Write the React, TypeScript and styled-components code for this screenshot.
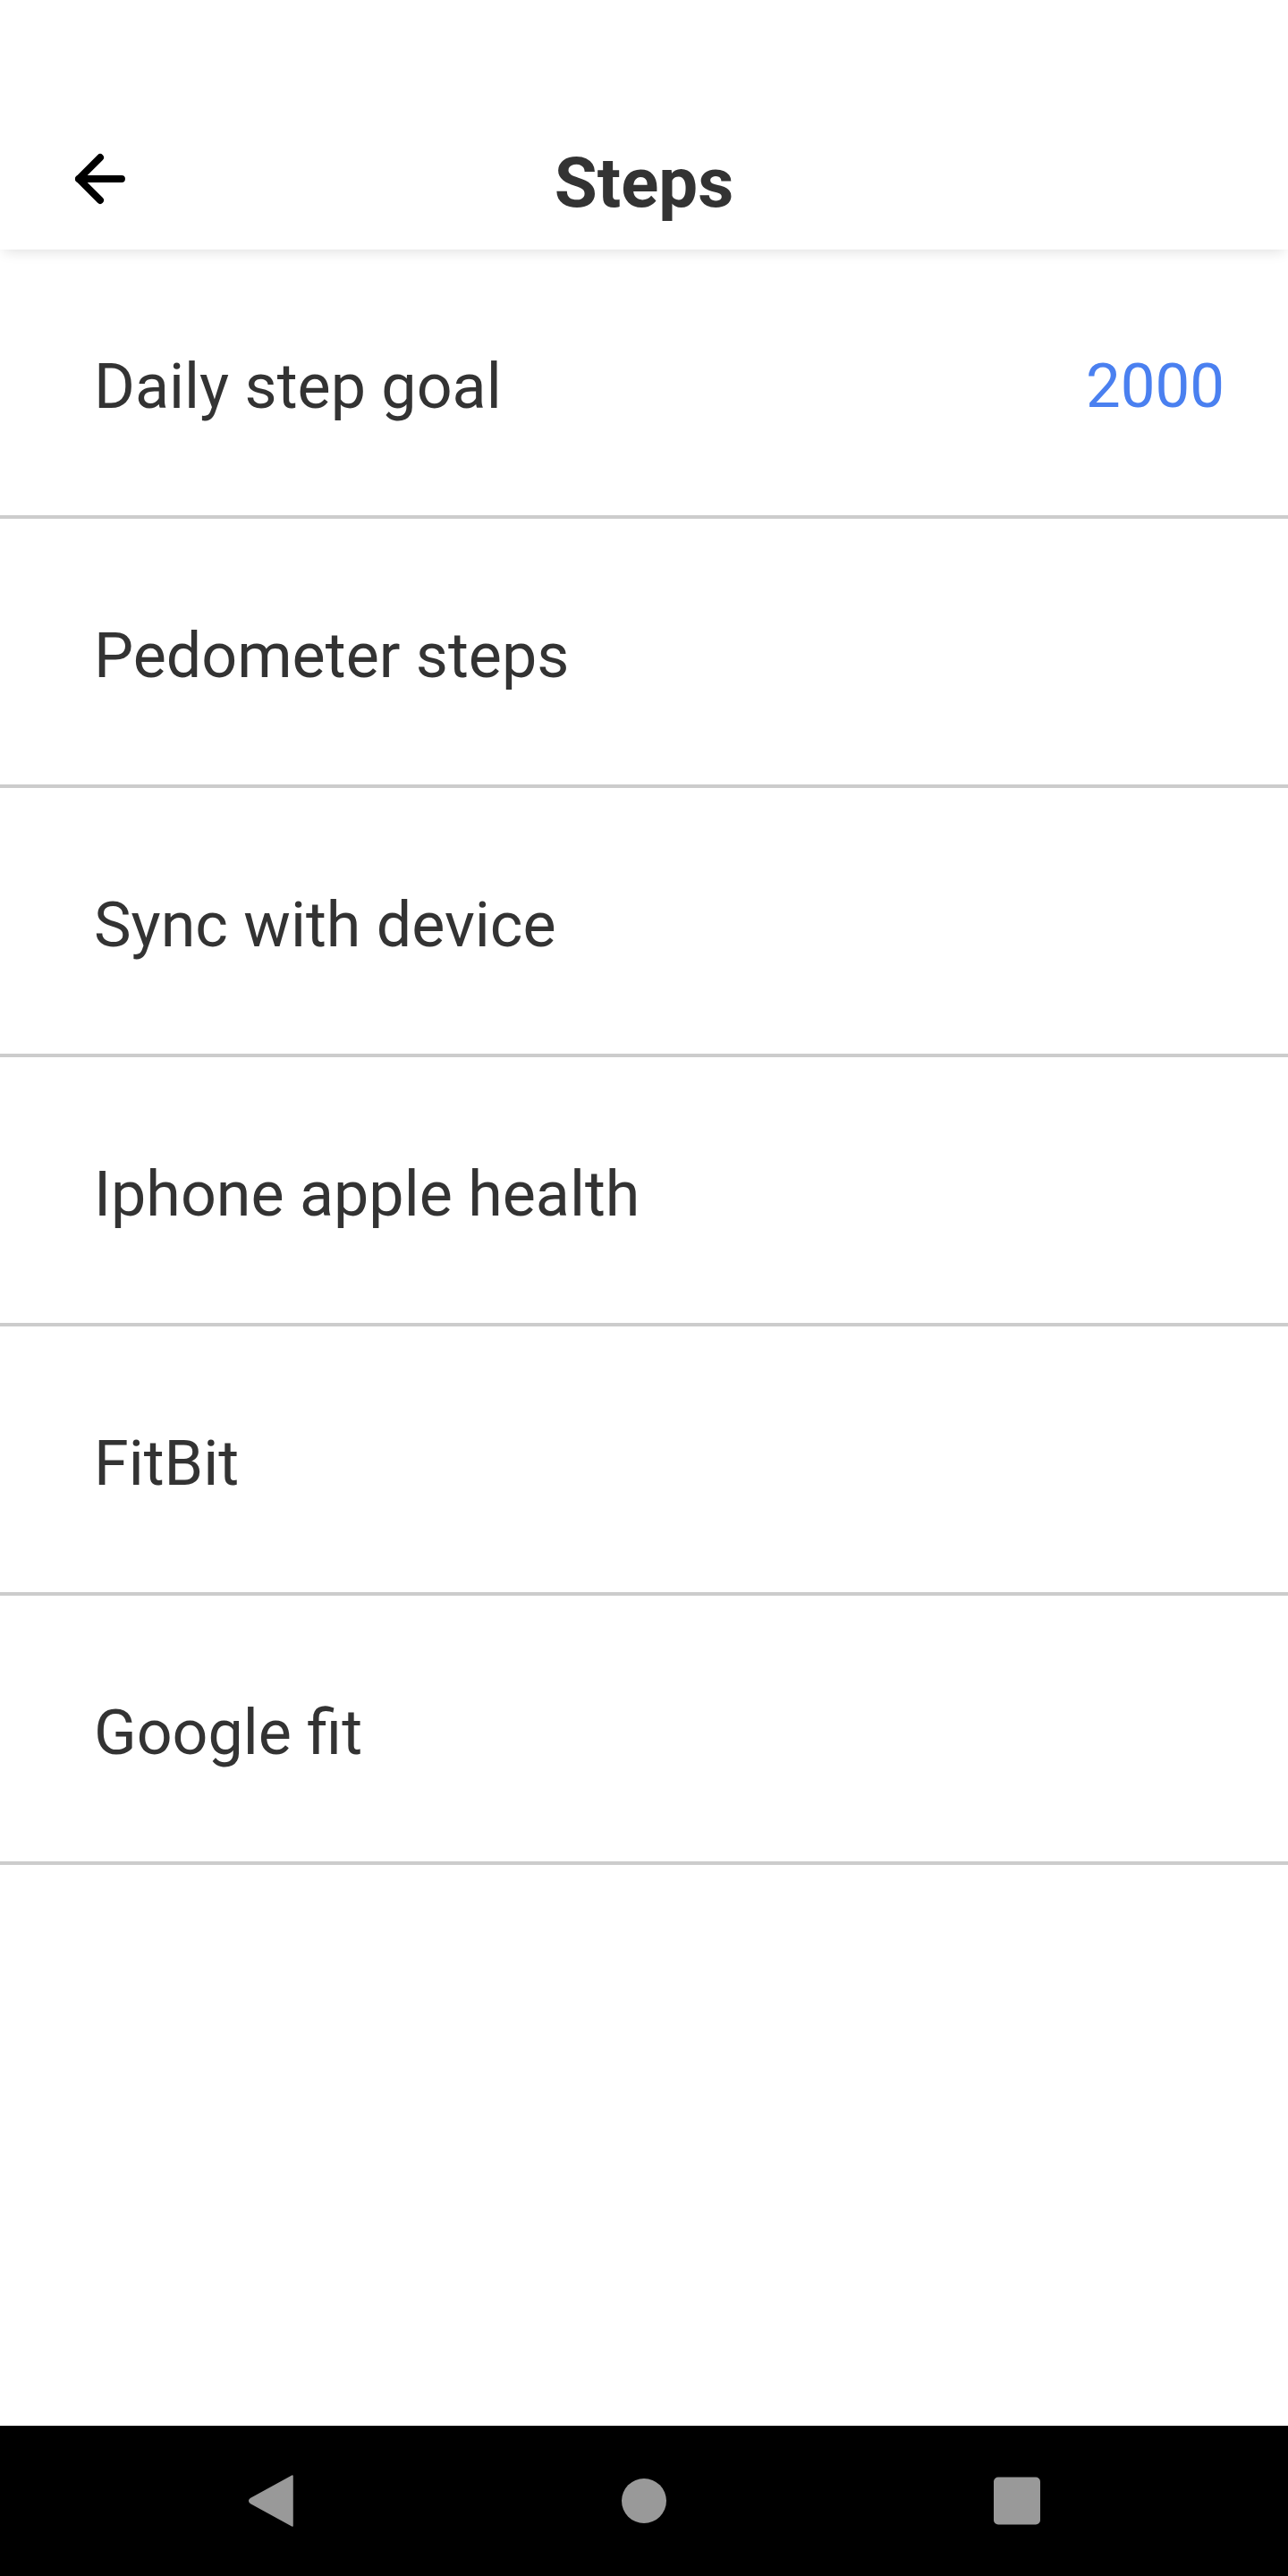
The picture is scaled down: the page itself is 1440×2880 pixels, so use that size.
import React from "react";
import styled, { createGlobalStyle } from "styled-components";
import { ArrowLeft } from "lucide-react";

const GlobalStyle = createGlobalStyle`
  html, body {
    margin: 0;
    padding: 0;
    background: #ffffff;
  }
  body {
    font-family: Roboto, "Noto Sans", "Liberation Sans", sans-serif;
    -webkit-font-smoothing: antialiased;
  }
  * { box-sizing: border-box; }
`;

const Screen = styled.div`
  width: 1440px;
  min-height: 2880px;
  display: flex;
  flex-direction: column;
  background: #ffffff;
`;

const Header = styled.header`
  position: relative;
  z-index: 1;
  display: flex;
  flex-direction: column;
  background: #ffffff;
  box-shadow: 0 6px 14px -4px rgba(0, 0, 0, 0.13);
`;

const StatusBar = styled.div`
  height: 120px;
`;

const Toolbar = styled.div`
  height: 159px;
  display: grid;
  grid-template-columns: 1fr auto 1fr;
  align-items: center;
`;

const BackButton = styled.button`
  justify-self: start;
  display: flex;
  align-items: center;
  justify-content: center;
  margin-left: 71px;
  padding: 0;
  border: none;
  background: transparent;
  color: #000000;
  cursor: pointer;
`;

const Title = styled.h1`
  margin: 0;
  padding-top: 10px;
  font-family: Roboto, "Noto Sans", sans-serif;
  font-size: 78px;
  line-height: 1;
  font-weight: 700;
  color: #333333;
`;

const List = styled.ul`
  margin: 0;
  padding: 0;
  list-style: none;
  display: flex;
  flex-direction: column;
`;

const Row = styled.li`
  height: 301px;
  display: flex;
  align-items: center;
  justify-content: space-between;
  padding: 8px 71px 0 105px;
  border-bottom: 4px solid #cccccc;
  background: #ffffff;
`;

const Label = styled.span`
  font-size: 70px;
  line-height: 1;
  font-weight: 400;
  color: #333333;
`;

const Value = styled.span`
  font-size: 69px;
  line-height: 1;
  font-weight: 400;
  color: #4a80f0;
`;

const Filler = styled.div`
  flex: 1;
`;

const NavBar = styled.nav`
  height: 168px;
  background: #000000;
  display: flex;
  align-items: center;
  justify-content: center;
  gap: 297px;
`;

const NavButton = styled.button`
  width: 120px;
  height: 120px;
  display: flex;
  align-items: center;
  justify-content: center;
  padding: 0;
  border: none;
  background: transparent;
  cursor: pointer;
`;

const items: { label: string; value?: string }[] = [
  { label: "Daily step goal", value: "2000" },
  { label: "Pedometer steps" },
  { label: "Sync with device" },
  { label: "Iphone apple health" },
  { label: "FitBit" },
  { label: "Google fit" },
];

export default function App() {
  return (
    <>
      <GlobalStyle />
      <Screen>
        <Header>
          <StatusBar />
          <Toolbar>
            <BackButton aria-label="Back">
              <ArrowLeft size={82} strokeWidth={2.35} />
            </BackButton>
            <Title>Steps</Title>
            <div />
          </Toolbar>
        </Header>
        <List>
          {items.map((it) => (
            <Row key={it.label}>
              <Label>{it.label}</Label>
              {it.value && <Value>{it.value}</Value>}
            </Row>
          ))}
        </List>
        <Filler />
        <NavBar>
          <NavButton aria-label="Back">
            <svg width="52" height="58" viewBox="0 0 52 58">
              <path
                d="M50 1 L50 57 L3.5 31.6 Q0 29 3.5 26.4 Z"
                fill="#999999"
                stroke="#999999"
                strokeWidth="1.5"
                strokeLinejoin="round"
              />
            </svg>
          </NavButton>
          <NavButton aria-label="Home">
            <svg width="52" height="52" viewBox="0 0 52 52">
              <circle cx="26" cy="26" r="25" fill="#999999" />
            </svg>
          </NavButton>
          <NavButton aria-label="Recents">
            <svg width="54" height="54" viewBox="0 0 54 54">
              <rect x="1" y="0.5" width="52" height="53" rx="5" fill="#999999" />
            </svg>
          </NavButton>
        </NavBar>
      </Screen>
    </>
  );
}
